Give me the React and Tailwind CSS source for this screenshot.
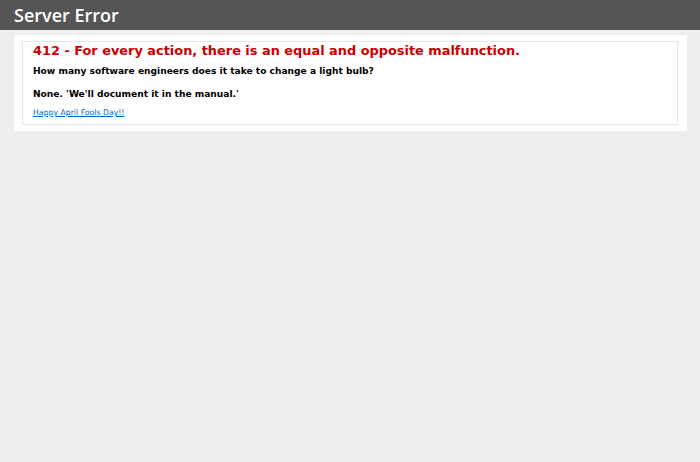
export default function App() {
  return (
    <div className="min-h-[462px] bg-[#eeeeee] font-['DejaVu_Sans',Verdana,sans-serif]">
      <div className="h-[30px] bg-[#555555] px-[14px] flex items-center">
        <h1 className="text-white text-[18px] font-semibold leading-none font-['Open_Sans',sans-serif] -mt-[1px]">Server Error</h1>
      </div>
      <div className="ml-[14px] mt-[5px] w-[673px] bg-white pt-[6px] pb-[6px] pl-[8px] pr-[9px]">
        <div className="border border-[#e6e6e6] px-[10px] pb-[6px]">
          <h2 className="text-[#cc0000] text-[12.9px] font-bold leading-[16px] mt-[1px]">
            412 - For every action, there is an equal and opposite malfunction.
          </h2>
          <h3 className="text-black text-[9.1px] font-bold mt-[6px] leading-[12px]">
            How many software engineers does it take to change a light bulb?
          </h3>
          <h3 className="text-black text-[9.1px] font-bold mt-[11px] leading-[12px]">
            None. 'We'll document it in the manual.'
          </h3>
          <a href="#" className="block mt-[8px] text-[7.75px] text-[#0066cc] underline leading-[10px]">
            Happy April Fools Day!!
          </a>
        </div>
      </div>
    </div>
  );
}
